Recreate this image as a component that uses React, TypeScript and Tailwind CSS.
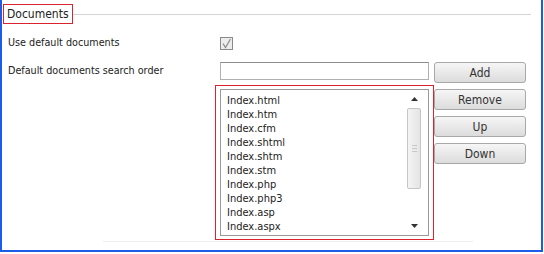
import React from 'react';

const docs = [
  'Index.html',
  'Index.htm',
  'Index.cfm',
  'Index.shtml',
  'Index.shtm',
  'Index.stm',
  'Index.php',
  'Index.php3',
  'Index.asp',
  'Index.aspx',
];

const font = { fontFamily: '"DejaVu Sans Condensed", "DejaVu Sans", sans-serif' };

const Btn = ({ label }: { label: string }) => (
  <button className="h-[21px] w-[92px] rounded-[3px] border border-[#a8a8a8] bg-gradient-to-b from-[#f6f6f6] to-[#dcdcdc] text-[12px] leading-none text-[#333]">
    {label}
  </button>
);

const App = () => {
  return (
    <div className="h-[254px] w-[544px] bg-white text-[#222]" style={font}>
      <div className="h-[252px] w-[543px] border-b-2 border-l-2 border-r-2 border-[#1d5ce6] pl-[1px] pr-[10px] pt-[4px]">
        <div className="flex items-center">
          <div className="border border-[#d9232e] px-[3px] py-[1px] text-[12px] leading-[16px]">Documents</div>
          <div className="h-px flex-1 bg-[#d4d4d4]" />
        </div>

        <div className="mt-[12px] flex h-[14px] items-center pl-[5px] text-[10.7px]">
          <span className="w-[212px] shrink-0">Use default documents</span>
          <span className="flex h-[13px] w-[13px] items-center justify-center border border-[#8a8a8a] bg-[#ececec]">
            <svg width="11" height="11" viewBox="0 0 11 11">
              <path d="M2 5.5 L4.5 9.5 L9.5 1" fill="none" stroke="#8a8a8a" strokeWidth="1.2" />
            </svg>
          </span>
        </div>

        <div className="mt-[12px] flex pl-[5px] text-[10.7px]">
          <div className="w-[212px] shrink-0 pt-[1px]">Default documents search order</div>
          <div className="flex w-[209px] shrink-0 flex-col">
            <div className="h-[18px] w-[209px] border border-[#b0b0b0] border-t-[#8e8e8e] bg-white" />
            <div className="ml-[-5px] mt-[5px] w-[219px] shrink-0 border border-[#d9232e] px-[4px] pb-[3px] pt-[3px]">
              <div className="flex h-[147px] border border-[#9a9a9a] bg-white">
                <ul className="flex-1 pl-[6px] pt-[4px] text-[11px] leading-[14px]">
                  {docs.map((d) => (
                    <li key={d}>{d}</li>
                  ))}
                </ul>
                <div className="my-[1px] mr-[6px] flex w-[16px] flex-col items-center">
                  <div className="flex h-[16px] items-center justify-center">
                    <svg width="7" height="4" viewBox="0 0 7 4">
                      <path d="M0 4 L3.5 0 L7 4 Z" fill="#333" />
                    </svg>
                  </div>
                  <div className="mt-[1px] flex h-[81px] w-[14px] flex-col items-center justify-center gap-[2px] rounded-[2px] border border-[#c6c6c6] bg-gradient-to-r from-[#f4f4f4] to-[#e4e4e4]">
                    <span className="h-px w-[5px] bg-[#c8c8c8]" />
                    <span className="h-px w-[5px] bg-[#c8c8c8]" />
                    <span className="h-px w-[5px] bg-[#c8c8c8]" />
                  </div>
                  <div className="flex-1" />
                  <div className="flex h-[16px] items-center justify-center">
                    <svg width="7" height="4" viewBox="0 0 7 4">
                      <path d="M0 0 L3.5 4 L7 0 Z" fill="#333" />
                    </svg>
                  </div>
                </div>
              </div>
            </div>
          </div>
          <div className="ml-[5px] flex shrink-0 flex-col gap-[6px]">
            <Btn label="Add" />
            <Btn label="Remove" />
            <Btn label="Up" />
            <Btn label="Down" />
          </div>
        </div>
        <div className="ml-[100px] mt-[1px] h-px w-[370px] bg-[#eeeeee]" />
      </div>
    </div>
  );
};

export default App;
